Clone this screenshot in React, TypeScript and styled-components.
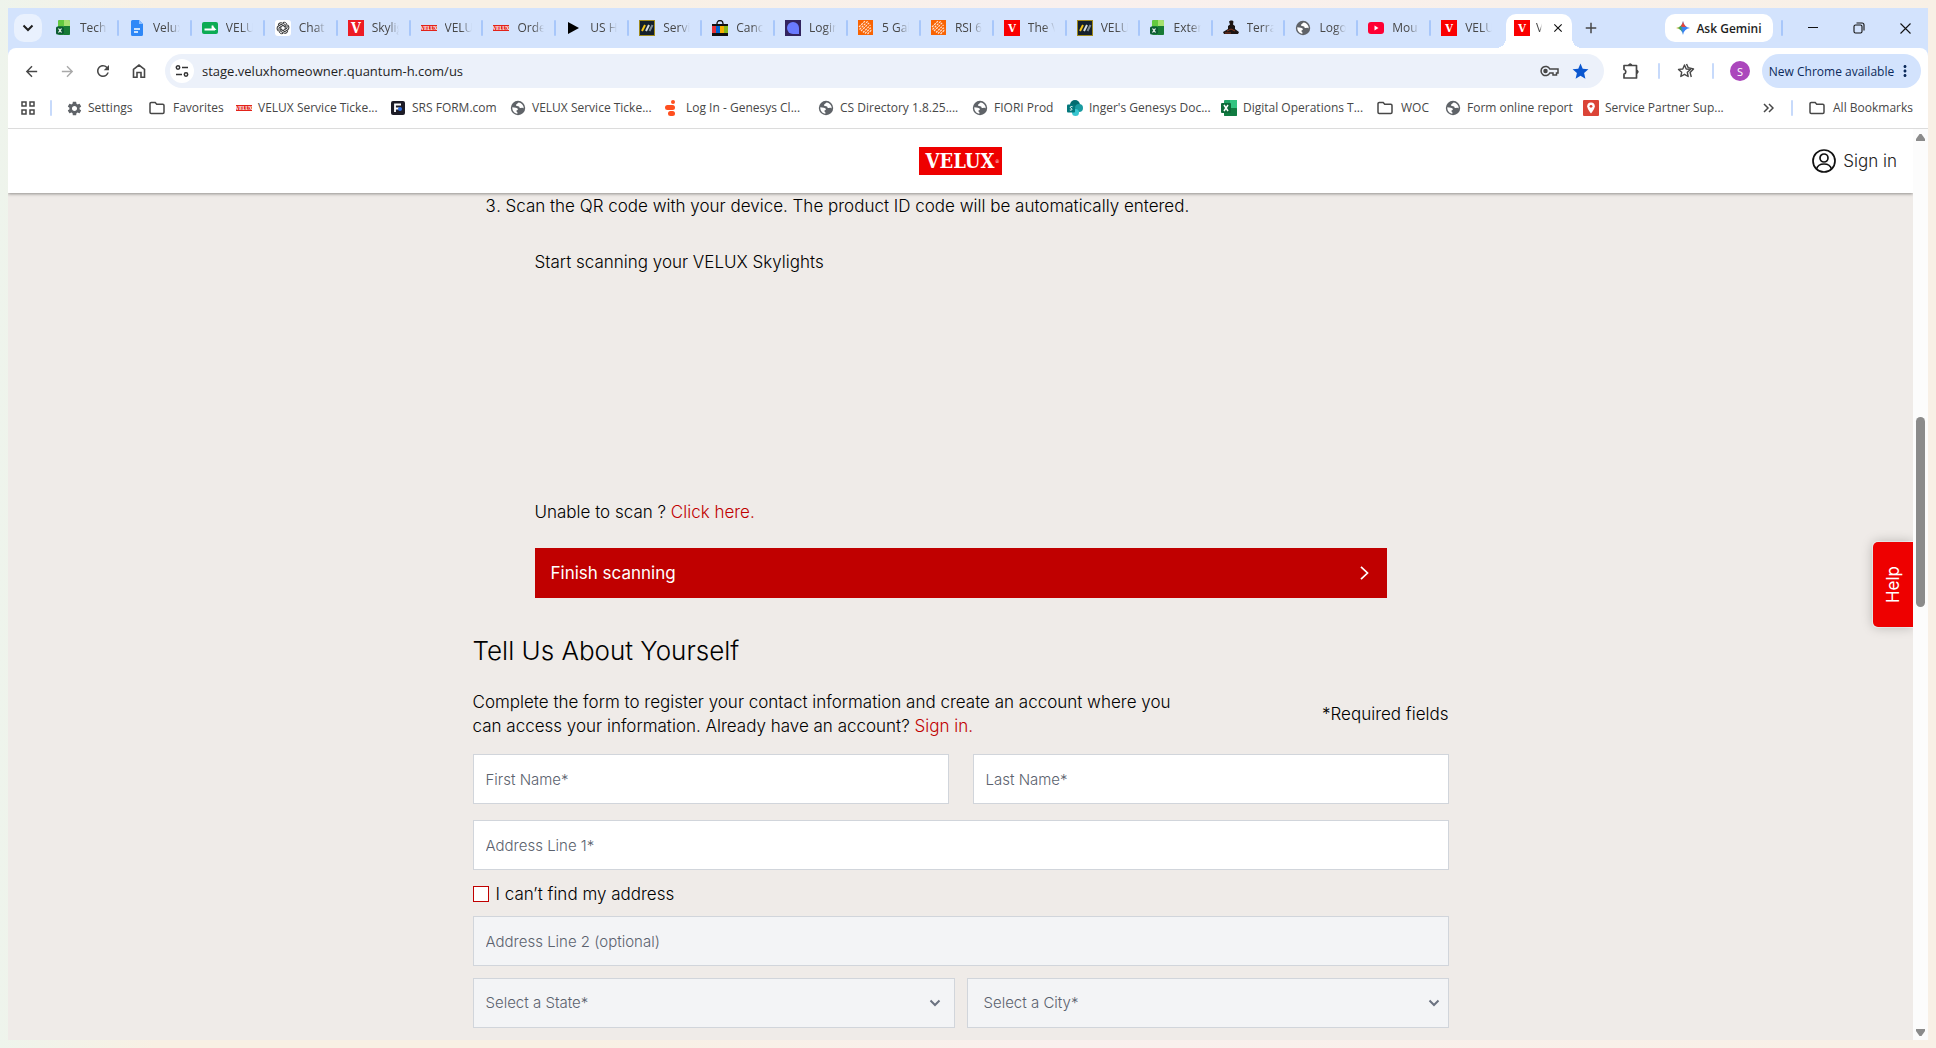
import React from "react";
import styled, { createGlobalStyle, css } from "styled-components";
import {
  MdAdd,
  MdArrowBack,
  MdArrowForward,
  MdClose,
  MdMoreVert,
  MdRefresh,
  MdSettings,
  MdStar,
} from "react-icons/md";

const chromeFont = `"Open Sans", "Noto Sans", sans-serif`;
const siteFont = `Inter, "Noto Sans", sans-serif`;

const GlobalStyle = createGlobalStyle`
  *, *::before, *::after { box-sizing: border-box; }
  body { margin: 0; }
  button, input, select { font: inherit; color: inherit; }
  button { border: 0; padding: 0; background: none; cursor: pointer; }
  svg { display: block; flex: none; }
`;

const Desktop = styled.div`
  height: 100vh;
  padding: 8px;
  background: linear-gradient(90deg, #eef4ec 0, #f8f0e4 8%, #f8f0e4 30%, #f9f0ee 55%, #f8f0e6 100%);
`;

const Window = styled.div`
  display: flex;
  flex-direction: column;
  height: 100%;
  overflow: hidden;
  background: #fff;
  font-family: ${chromeFont};
  color: #1f1f1f;
`;

/* ---------- tab strip ---------- */

const TabStrip = styled.div`
  display: flex;
  align-items: center;
  height: 40px;
  flex: none;
  padding-left: 6px;
  background: #d3e3fd;
`;

const TabSearch = styled.button`
  display: grid;
  place-items: center;
  width: 28px;
  height: 28px;
  margin-right: 4px;
  border-radius: 10px;
  background: #e9f1fe;
`;

const Tabs = styled.div`
  display: flex;
  flex: 1;
  min-width: 0;
  align-self: stretch;
`;

const Tab = styled.button`
  display: flex;
  flex: 1 1 0;
  min-width: 0;
  align-items: center;
  gap: 8px;
  padding-left: 10px;
  text-align: left;

  &::after {
    content: "";
    width: 2px;
    height: 16px;
    margin-left: auto;
    border-radius: 1px;
    background: #a8c7fa;
  }
  &:last-of-type::after { background: none; }
`;

const TabLabel = styled.span<{ $short?: boolean }>`
  width: ${(p) => (p.$short ? 6 : 27)}px;
  overflow: hidden;
  white-space: nowrap;
  font-size: 12px;
  line-height: 16px;
  color: #474747;
  mask-image: linear-gradient(90deg, #000 60%, transparent);
`;

const ActiveTab = styled.div`
  position: relative;
  display: flex;
  align-items: center;
  align-self: flex-end;
  gap: 6px;
  width: 66px;
  height: 34px;
  margin: 0 5px 0 2px;
  padding: 0 0 6px 8px;
  border-radius: 10px 10px 0 0;
  background: #fff;

  &::before, &::after {
    content: "";
    position: absolute;
    bottom: 0;
    width: 10px;
    height: 10px;
  }
  &::before {
    right: 100%;
    background: radial-gradient(circle at 0 0, transparent 10px, #fff 10px);
  }
  &::after {
    left: 100%;
    background: radial-gradient(circle at 100% 0, transparent 10px, #fff 10px);
  }
`;

const IconButton = styled.button<{ $w?: number }>`
  display: grid;
  place-items: center;
  flex: none;
  width: ${(p) => p.$w ?? 36}px;
  height: 28px;
  color: #474747;
`;

const AskGemini = styled.button`
  display: flex;
  align-items: center;
  justify-content: center;
  gap: 6px;
  width: 108px;
  height: 28px;
  margin-left: 60px;
  margin-right: 8px;
  border-radius: 10px;
  background: #fff;
  font-size: 12px;
  font-weight: 600;
`;

const Divider = styled.span<{ $tone?: string; $before?: number }>`
  flex: none;
  width: 2px;
  height: 16px;
  margin-left: ${(p) => p.$before ?? 0}px;
  border-radius: 1px;
  background: ${(p) => p.$tone ?? "#c7dafb"};
`;

const WindowControls = styled.div`
  display: flex;
  margin-left: 7px;
`;

/* ---------- toolbar ---------- */

const ToolBand = styled.div`
  flex: none;
  background: #d3e3fd;
`;

const Toolbar = styled.div`
  display: flex;
  align-items: center;
  height: 46px;
  padding: 0 7px 0 5px;
  border-radius: 8px 8px 0 0;
  background: #fff;
`;

const AddressBar = styled.div`
  display: flex;
  flex: 1;
  align-items: center;
  gap: 8px;
  height: 34px;
  margin-left: 8px;
  padding: 0 14px 0 5px;
  border-radius: 17px;
  background: #ecf1fa;
`;

const SiteInfo = styled.button`
  display: grid;
  place-items: center;
  width: 24px;
  height: 24px;
  border-radius: 50%;
  background: #fff;
`;

const Url = styled.input`
  flex: 1;
  min-width: 0;
  padding: 0;
  border: 0;
  outline: 0;
  background: none;
  font-size: 13px;
  line-height: 20px;
`;

const Avatar = styled.button`
  display: grid;
  place-items: center;
  width: 20px;
  height: 20px;
  margin: 0 12px 0 16px;
  border-radius: 50%;
  background: #ab47bc;
  color: #fff;
  font-size: 11px;
`;

const UpdateButton = styled.button`
  display: flex;
  align-items: center;
  justify-content: center;
  gap: 2px;
  width: 159px;
  height: 34px;
  border-radius: 17px;
  background: #d3e3fd;
  color: #0b2a5b;
  font-size: 12px;
  white-space: nowrap;
`;

/* ---------- bookmarks ---------- */

const Bookmarks = styled.nav`
  display: flex;
  align-items: center;
  flex: none;
  height: 35px;
  padding: 0 15px 7px 13px;
  border-bottom: 1px solid #dcdcdc;
`;

const Bookmark = styled.a<{ $w?: number; $wide?: boolean }>`
  display: flex;
  align-items: center;
  gap: ${(p) => (p.$wide ? 8 : 6)}px;
  ${(p) => p.$w && css`width: ${p.$w}px;`}
  color: #474747;
  font-size: 12px;
  line-height: 16px;
  white-space: nowrap;
  text-decoration: none;
`;

const BookmarkRow = styled.div`
  display: flex;
  flex: 1;
  min-width: 0;
  overflow: hidden;
  margin-left: 14px;
`;

const FavSlot = styled.span`
  display: grid;
  place-items: center;
  flex: none;
  width: 16px;
  height: 16px;
  color: #5f6368;
`;

/* ---------- site ---------- */

const Viewport = styled.div`
  display: flex;
  flex: 1;
  min-height: 0;
  font-family: ${siteFont};
`;

const Site = styled.div`
  position: relative;
  flex: 1;
  min-width: 0;
  overflow: hidden;
  background: #efebe8;
  font-size: 17px;
  font-weight: 300;
  line-height: 24px;
  color: #000;
`;

const SiteHeader = styled.header`
  display: grid;
  grid-template-columns: 1fr auto 1fr;
  align-items: center;
  height: 64px;
  padding: 0 16px;
  background: #fff;
  box-shadow: 0 1px 3px rgba(0, 0, 0, 0.4);
`;

const SignIn = styled.a`
  display: flex;
  align-items: center;
  justify-content: flex-end;
  gap: 7px;
  grid-column: 3;
  color: #222;
  text-decoration: none;
`;

const LogoLink = styled.a`
  grid-column: 2;
`;

const Content = styled.main`
  width: 100%;
  max-width: 976px;
  margin: 0 auto;
`;

const Steps = styled.ol`
  margin: 1px 0 0;
  padding-left: 33px;
`;

const ScanArea = styled.section`
  padding: 32px 62px 0;
`;

const ScanText = styled.p`
  margin: 0;
`;

const ScannerFrame = styled.div`
  height: 226px;
`;

const RedLink = styled.a`
  color: #c00000;
  text-decoration: none;
`;

const FinishButton = styled.button`
  display: flex;
  align-items: center;
  justify-content: space-between;
  width: 100%;
  height: 50px;
  margin-top: 24px;
  padding: 0 16px;
  background: #c00000;
  color: #fff;
  font-weight: 400;
`;

const Title = styled.h2`
  margin: 37px 0 23px;
  font-size: 26px;
  font-weight: 300;
  line-height: 32px;
`;

const Intro = styled.div`
  display: flex;
  align-items: center;
  justify-content: space-between;
  margin-bottom: 16px;
`;

const IntroText = styled.p`
  max-width: 728px;
  margin: 0;
`;

const Row = styled.div<{ $gap?: number; $after: number }>`
  display: flex;
  gap: ${(p) => p.$gap ?? 0}px;
  margin-bottom: ${(p) => p.$after}px;
`;

const field = css`
  flex: 1;
  width: 100%;
  min-width: 0;
  height: 50px;
  padding: 0 12px;
  border: 1px solid #d1d5db;
  border-radius: 0;
  outline: 0;
  background: #fff;
  color: #5b626e;
  font-size: 15px;
  line-height: 20px;
  &:disabled { background: #f3f4f6; opacity: 1; }
`;

const Field = styled.input`
  ${field}
  &::placeholder { color: #5b626e; opacity: 1; }
`;

const SelectBox = styled.div<{ $edge?: number }>`
  display: grid;
  flex: 1;
  align-items: center;
  > * { grid-area: 1 / 1; }
  > svg { justify-self: end; margin-right: ${(p) => p.$edge ?? 14}px; pointer-events: none; color: #6b7280; }
`;

const Select = styled.select<{ $inset?: number }>`
  ${field}
  appearance: none;
  padding-left: ${(p) => p.$inset ?? 12}px;
`;

const CheckLabel = styled.label`
  display: flex;
  align-items: center;
  gap: 7px;
  margin: 12px 0 10px;
`;

const Check = styled.input`
  appearance: none;
  width: 16px;
  height: 16px;
  margin: 0;
  border: 1px solid #c00000;
  background: #fff;
`;

const HelpTab = styled.button`
  position: absolute;
  right: 0;
  top: 413px;
  width: 40px;
  height: 85px;
  border-radius: 5px 0 0 5px;
  background: #ee0000;
  color: #fff;
  font-weight: 400;
  box-shadow: 0 0 12px rgba(0, 0, 0, 0.25), 0 0 0 1px #fff;
  writing-mode: sideways-lr;
`;

const ScrollTrack = styled.div`
  display: grid;
  grid-template-rows: 283px 190px 1fr;
  justify-items: center;
  flex: none;
  width: 15px;
  padding: 5px 0 4px;
  background: #fcfcfc;
  > svg:last-child { align-self: end; }
`;

const ScrollThumb = styled.div`
  width: 9px;
  border-radius: 5px;
  background: #8b8b8b;
`;

/* ---------- drawings ---------- */

const slab = `"DejaVu Serif Condensed", "DejaVu Serif", serif`;

const VeluxV = ({ bright }: { bright?: boolean }) => (
  <svg width="16" height="16" viewBox="0 0 16 16">
    <rect width="16" height="16" fill={bright ? "#fa0000" : "#ed1c24"} />
    <text x="8" y={bright ? 12 : 13} textAnchor="middle" fontFamily={slab} fontWeight="700" fontSize={bright ? 11 : 14} fill="#fff">V</text>
  </svg>
);
const VeluxMini = () => (
  <svg width="16" height="16" viewBox="0 0 16 16">
    <rect y="5" width="16" height="6" fill="#e2231a" />
    <text x="8" y="10" textAnchor="middle" fontFamily={slab} fontWeight="700" fontSize="5" fill="#fff">VELUX</text>
  </svg>
);
const Excel = ({ bright }: { bright?: boolean }) =>
  bright ? (
    <svg width="16" height="16" viewBox="0 0 16 16">
      <rect x="2" y="0" width="12" height="15" rx="1.500" fill="#2a9d3c" />
      <path d="M3.500 0H8v6H2V1.500A1.500 1.500 0 0 1 3.500 0z" fill="#63c93f" />
      <path d="M8 0h4.500A1.500 1.500 0 0 1 14 1.500V6H8z" fill="#a5e070" />
      <path d="M8 6h6v7.500a1.500 1.500 0 0 1-1.500 1.500H8z" fill="#177a35" />
      <rect x="0" y="6.500" width="8" height="8" rx="1.500" fill="#0c5c33" />
      <path d="M2.500 8.500l3 4M5.500 8.500l-3 4" stroke="#fff" strokeWidth="1.200" />
    </svg>
  ) : (
    <svg width="16" height="16" viewBox="0 0 16 16">
      <rect x="3" y="0" width="13" height="16" rx="1" fill="#21a366" />
      <rect x="9" y="0" width="7" height="8" fill="#33c481" />
      <rect x="3" y="8" width="13" height="8" rx="1" fill="#107c41" />
      <rect x="0" y="3" width="10" height="10" rx="1" fill="#0e6b39" />
      <path d="M3 5l4 6M7 5l-4 6" stroke="#fff" strokeWidth="1.500" />
    </svg>
  );
const Docs = () => (
  <svg width="16" height="16" viewBox="0 0 16 16">
    <path d="M3.500 0H10l4 4v10.500a1.500 1.500 0 0 1-1.500 1.500h-9A1.500 1.500 0 0 1 2 14.500v-13A1.500 1.500 0 0 1 3.500 0z" fill="#2f88f7" />
    <path d="M10 0l4 4h-4z" fill="#8ec0ff" />
    <path d="M5 9h6M5 12h4" stroke="#fff" strokeWidth="1.500" />
  </svg>
);
const GreenArrow = () => (
  <svg width="16" height="16" viewBox="0 0 16 16">
    <rect y="2" width="16" height="12" rx="2" fill="#0cab54" />
    <path d="M2.500 9.500H13M10.500 5.500v5" stroke="#fff" strokeWidth="1.800" />
    <path d="M10.500 5.500l4 4.500h-4z" fill="#fff" />
  </svg>
);
const ChatKnot = () => (
  <svg width="16" height="16" viewBox="0 0 16 16">
    <rect width="16" height="16" rx="3" fill="#fff" />
    <g fill="none" stroke="#333" strokeWidth="1">
      {[0, 60, 120, 180, 240, 300].map((a) => (
        <path key={a} transform={`rotate(${a} 8 8)`} d="M8 2.500c2-.8 4 .6 4 2.600v3.200L8 10.500" />
      ))}
    </g>
  </svg>
);
const Play = () => (
  <svg width="16" height="16" viewBox="0 0 16 16"><path d="M2 2l11 6-11 6z" fill="#000" /></svg>
);
const Stripes = () => (
  <svg width="16" height="16" viewBox="0 0 16 16">
    <rect x=".5" y=".5" width="15" height="15" fill="#14202b" stroke="#a08a1c" />
    <path d="M3 11l3-6" stroke="#f5c518" strokeWidth="2" />
    <path d="M7 11l3-6" stroke="#d7dde2" strokeWidth="2" />
    <path d="M10.500 11l3-6" stroke="#7f8c96" strokeWidth="2" />
  </svg>
);
const Bag = () => (
  <svg width="16" height="16" viewBox="0 0 16 16">
    <path d="M5 5V3.500a3 3 0 0 1 6 0V5" fill="none" stroke="#111" strokeWidth="1.300" />
    <path d="M0 4h16v3H0zM0 13h16v3H0z" fill="#111" />
    <path d="M0 6h4v7H0z" fill="#e53238" /><path d="M4 6h4v7H4z" fill="#0064d2" />
    <path d="M8 6h4v7H8z" fill="#f5af02" /><path d="M12 6h4v7h-4z" fill="#86b817" />
  </svg>
);
const LoginMark = () => (
  <svg width="16" height="16" viewBox="0 0 16 16">
    <rect width="16" height="16" fill="#33245f" />
    <path d="M8 2a6 6 0 0 1 6 6v6H8A6 6 0 0 1 8 2z" fill="#6a7bff" />
  </svg>
);
const Depot = () => (
  <svg width="16" height="16" viewBox="0 0 16 16">
    <rect width="15" height="15" fill="#f96302" />
    <g stroke="#ffe3d2" strokeWidth="1.200" strokeDasharray="2.200 .9">
      <path d="M1 7l6-6M1.500 9.500L10 1M3 11l8.500-8.500M5 12.500L12.500 5M7 13.500l6.500-6.500M9.500 14l4.500-4.500" />
    </g>
  </svg>
);
const Terra = () => (
  <svg width="16" height="16" viewBox="0 0 16 16">
    <path d="M6 1.500C7 0 10 0 10.500 1.500L10 4.500l2 1.500v3l4 3-1 2H1l-1-2 5-3V6l2-1.500z" fill="#1c1513" />
    <path d="M4 11l4-2 4 2M2 13h6" stroke="#8a3b22" strokeWidth="1" fill="none" />
  </svg>
);
const Tube = () => (
  <svg width="16" height="16" viewBox="0 0 16 16">
    <rect y="2" width="16" height="12" rx="3" fill="#ff0033" />
    <path d="M6.500 5.500v5l4-2.500z" fill="#fff" />
  </svg>
);
const SrsMark = () => (
  <svg width="14" height="14" viewBox="0 0 14 14">
    <rect width="14" height="14" rx="2" fill="#1d1c26" />
    <path d="M4 11V3.500h6M4 7.500h4" stroke="#fff" strokeWidth="1.800" fill="none" />
    <circle cx="9" cy="8" r="2" fill="#2f6fe4" />
  </svg>
);
const Genesys = () => (
  <svg width="16" height="16" viewBox="0 0 16 16" fill="#ff4f1f">
    <circle cx="9" cy="2" r="2" /><rect x="1" y="5" width="10" height="5" rx="2.500" />
    <rect x="4" y="11" width="7" height="5" rx="2.500" />
  </svg>
);
const SharePoint = () => (
  <svg width="16" height="16" viewBox="0 0 16 16">
    <circle cx="8" cy="5" r="5" fill="#036c70" /><circle cx="12" cy="8" r="4" fill="#1a9ba1" />
    <circle cx="8.500" cy="12.500" r="3.500" fill="#37c6d0" /><rect y="4.500" width="8" height="8" rx="1" fill="#03787c" />
    <path d="M5.500 6.700c-2-.8-3 .8-1.500 1.600 1.700.6 1 2.400-1.200 1.700" stroke="#fff" fill="none" />
  </svg>
);
const Pin = () => (
  <svg width="16" height="16" viewBox="0 0 16 16">
    <rect width="16" height="16" rx="1" fill="#db4437" />
    <path d="M8 2.500a3.800 3.800 0 0 1 3.800 3.800C11.800 9 8 13.500 8 13.500S4.200 9 4.200 6.300A3.800 3.800 0 0 1 8 2.500z" fill="#fff" />
    <circle cx="8" cy="6.300" r="1.400" fill="#db4437" />
  </svg>
);
const Globe = () => (
  <svg width="16" height="16" viewBox="0 0 16 16">
    <circle cx="8" cy="8" r="7.200" fill="#5f6368" />
    <path d="M9 2.600c-1.500.2-1.300 1.300-2.500 1.600-1 .3-.6 1.600.5 1.700 1.600.2 2.500.4 2.500 1.500s1.500.6 2.300.4 1.600.2 1.900.8A5.700 5.700 0 0 0 9 2.600zM2.300 7.200C2 10.500 4.200 13.300 7.400 13.700v-1.400c-.9-.2-1-1-.9-1.800.7-.3 1.500-.4 1.400-1.400C7.500 7.700 4.800 7.300 2.300 7.200z" fill="#fff" />
  </svg>
);
const Folder = () => (
  <svg width="16" height="14" viewBox="0 0 16 14">
    <path d="M2.200 1.500h4l1.500 1.700h6.100a1.200 1.200 0 0 1 1.200 1.200v6.900a1.200 1.200 0 0 1-1.200 1.200H2.200A1.200 1.200 0 0 1 1 11.300V2.700a1.200 1.200 0 0 1 1.200-1.200z" fill="none" stroke="#474747" strokeWidth="1.500" />
  </svg>
);
const Chevron = ({ stroke = 2 }: { stroke?: number }) => (
  <svg width="12" height="12" viewBox="0 0 12 12" fill="none" stroke="currentColor" strokeWidth={stroke}>
    <path d="M1.500 3.500L6 8l4.500-4.500" />
  </svg>
);
const GeminiSpark = () => (
  <svg width="14" height="14" viewBox="0 0 14 14">
    <defs>
      <linearGradient id="spark" x1="0" y1="0.500" x2="1" y2="0.500">
        <stop offset="0" stopColor="#f9ab00" /><stop offset=".3" stopColor="#34a853" />
        <stop offset=".5" stopColor="#3b82f6" /><stop offset="1" stopColor="#3b82f6" />
      </linearGradient>
    </defs>
    <path d="M7 0c.6 4 3 6.400 7 7-4 .6-6.400 3-7 7-.6-4-3-6.400-7-7 4-.6 6.400-3 7-7z" fill="url(#spark)" />
    <path d="M7 0c.5 3 1.600 4.700 3.300 5.800L7 6 4.500 5.200C6 4 6.700 2.300 7 0z" fill="#ea4335" />
  </svg>
);
const HomeIcon = () => (
  <svg width="14" height="16" viewBox="0 0 14 16" fill="none" stroke="#474747" strokeWidth="1.600">
    <path d="M1.500 14.200V6.300L7 2l5.500 4.300v7.900H9V9.500H5v4.700z" />
  </svg>
);
const TuneIcon = () => (
  <svg width="14" height="12" viewBox="0 0 14 12" fill="none" stroke="#333" strokeWidth="1.500">
    <circle cx="3" cy="2.500" r="1.700" /><path d="M7 2.500h6M1 9.500h6" /><circle cx="11" cy="9.500" r="1.700" />
  </svg>
);
const KeyIcon = () => (
  <svg width="20" height="12" viewBox="0 0 20 12" fill="none" stroke="#474747" strokeWidth="1.500">
    <path d="M9.800 4A4.600 4.600 0 1 0 9.800 8H13v2h3.500V8H18V4z" /><circle cx="5.500" cy="6" r="1.500" fill="#474747" />
  </svg>
);
const PuzzleIcon = () => (
  <svg width="18" height="18" viewBox="0 0 18 18" fill="none" stroke="#474747" strokeWidth="1.700" strokeLinejoin="round">
    <path d="M2 3.500h12.500v12.500H2V12a2.300 2.300 0 0 0 0-4.500z" />
    <path d="M6.500 3.200a1.800 1.800 0 0 1 3.500 0zM14.800 8a1.800 1.800 0 0 1 0 3.500z" fill="#474747" strokeWidth="1" />
  </svg>
);
const StarListIcon = () => (
  <svg width="18" height="16" viewBox="0 0 18 16" fill="none" stroke="#474747" strokeWidth="1.400" strokeLinejoin="round">
    <path d="M7.500 2l1.700 4 4.300.4-3.200 2.900.9 4.200-3.700-2.200-3.700 2.200.9-4.200L1.500 6.400l4.300-.4z" />
    <path d="M9.500 1l1.700 3.600L16.500 6l-3.400 3.500 1.200 4.500" />
  </svg>
);
const RestoreIcon = () => (
  <svg width="12" height="12" viewBox="0 0 12 12" fill="none" stroke="#111" strokeWidth="1.100">
    <rect x="1" y="3" width="8" height="8" rx="1.500" /><path d="M3.500 1H9a2 2 0 0 1 2 2v5.500" />
  </svg>
);
const UserIcon = () => (
  <svg width="24" height="24" viewBox="0 0 24 24" fill="none" stroke="#111" strokeWidth="1.700">
    <circle cx="12" cy="12" r="11" /><circle cx="12" cy="9" r="4" /><path d="M4.500 20c1-3.600 4-5 7.500-5s6.500 1.400 7.500 5" />
  </svg>
);
const VeluxLogo = () => (
  <svg width="83" height="28" viewBox="0 0 83 28" role="img" aria-label="VELUX">
    <rect width="83" height="28" fill="#ee0000" />
    <text x="41" y="21" textAnchor="middle" fontFamily={slab} fontWeight="700" fontSize="20" fill="#fff">VELUX</text>
    <text x="76" y="16" fontFamily={slab} fontSize="5" fill="#fff">®</text>
  </svg>
);

/* ---------- data ---------- */

const tabs: [string, React.ReactNode][] = [
  ["Tech", <Excel bright />], ["Velux", <Docs />], ["VELU", <GreenArrow />], ["Chat", <ChatKnot />],
  ["Skylig", <VeluxV />], ["VELU", <VeluxMini />], ["Orde", <VeluxMini />], ["US H", <Play />],
  ["Servi", <Stripes />], ["Canc", <Bag />], ["Login", <LoginMark />], ["5 Gal", <Depot />],
  ["RSI 6", <Depot />], ["The V", <VeluxV bright />], ["VELU", <Stripes />], ["Exter", <Excel bright />],
  ["Terra", <Terra />], ["Logo", <Globe />], ["Mou", <Tube />], ["VELU", <VeluxV bright />],
];

const bookmarks: [string, React.ReactNode, number][] = [
  ["Settings", <MdSettings size={17} />, 83],
  ["Favorites", <Folder />, 87],
  ["VELUX Service Ticke...", <VeluxMini />, 154],
  ["SRS FORM.com", <SrsMark />, 120],
  ["VELUX Service Ticke...", <Globe />, 154],
  ["Log In - Genesys Cl...", <Genesys />, 154],
  ["CS Directory 1.8.25....", <Globe />, 154],
  ["FIORI Prod", <Globe />, 95],
  ["Inger's Genesys Doc...", <SharePoint />, 154],
  ["Digital Operations T...", <Excel />, 156],
  ["WOC", <Folder />, 68],
  ["Form online report", <Globe />, 138],
  ["Service Partner Sup...", <Pin />, 140],
];

export default function App() {
  return (
    <Desktop>
      <GlobalStyle />
      <Window>
        <TabStrip>
          <TabSearch aria-label="Search tabs"><Chevron /></TabSearch>
          <Tabs>
            {tabs.map(([label, icon], i) => (
              <Tab key={i}>
                <FavSlot>{icon}</FavSlot>
                <TabLabel>{label}</TabLabel>
              </Tab>
            ))}
          </Tabs>
          <ActiveTab>
            <FavSlot><VeluxV bright /></FavSlot>
            <TabLabel $short>V</TabLabel>
            <IconButton $w={20} aria-label="Close tab"><MdClose size={14} color="#111" /></IconButton>
          </ActiveTab>
          <IconButton $w={28} aria-label="New tab"><MdAdd size={18} /></IconButton>
          <AskGemini><GeminiSpark />Ask Gemini</AskGemini>
          <Divider $tone="#a8c7fa" />
          <WindowControls>
            <IconButton $w={46} aria-label="Minimize">
              <svg width="10" height="10" viewBox="0 0 10 10"><path d="M0 4.500h10" stroke="#111" /></svg>
            </IconButton>
            <IconButton $w={46} aria-label="Restore"><RestoreIcon /></IconButton>
            <IconButton $w={46} aria-label="Close">
              <svg width="11" height="11" viewBox="0 0 11 11"><path d="M.5.5l10 10M10.500.5l-10 10" stroke="#111" strokeWidth="1.100" /></svg>
            </IconButton>
          </WindowControls>
        </TabStrip>

        <ToolBand>
          <Toolbar>
            <IconButton aria-label="Back"><MdArrowBack size={17} /></IconButton>
            <IconButton aria-label="Forward"><MdArrowForward size={17} color="#a9a9a9" /></IconButton>
            <IconButton aria-label="Reload"><MdRefresh size={18} /></IconButton>
            <IconButton aria-label="Home"><HomeIcon /></IconButton>
            <AddressBar>
              <SiteInfo aria-label="View site information"><TuneIcon /></SiteInfo>
              <Url aria-label="Address" defaultValue="stage.veluxhomeowner.quantum-h.com/us" />
              <IconButton $w={24} aria-label="Passwords"><KeyIcon /></IconButton>
              <IconButton $w={20} aria-label="Bookmarked"><MdStar size={19} color="#0b57d0" /></IconButton>
            </AddressBar>
            <IconButton $w={54} aria-label="Extensions"><PuzzleIcon /></IconButton>
            <Divider />
            <IconButton $w={52} aria-label="Reading list"><StarListIcon /></IconButton>
            <Divider />
            <Avatar aria-label="Profile">S</Avatar>
            <UpdateButton>New Chrome available <MdMoreVert size={18} /></UpdateButton>
          </Toolbar>
        </ToolBand>

        <Bookmarks>
          <IconButton $w={14} aria-label="Apps">
            <svg width="14" height="14" viewBox="0 0 14 14" fill="none" stroke="#474747" strokeWidth="1.500">
              <path d="M1 1h4v4H1zM9 1h4v4H9zM1 9h4v4H1zM9 9h4v4H9z" />
            </svg>
          </IconButton>
          <Divider $before={15} />
          <BookmarkRow>
            {bookmarks.map(([label, icon, w], i) => (
              <Bookmark key={i} href="#" $w={w} $wide={label === "Favorites" || label === "WOC"}>
                <FavSlot>{icon}</FavSlot>{label}
              </Bookmark>
            ))}
          </BookmarkRow>
          <IconButton $w={14} aria-label="More bookmarks">
            <svg width="11" height="10" viewBox="0 0 11 10" fill="none" stroke="#474747" strokeWidth="1.500"><path d="M1 1l4 4-4 4M6 1l4 4-4 4" /></svg>
          </IconButton>
          <IconButton $w={34} as="span"><Divider /></IconButton>
          <Bookmark href="#" $wide><FavSlot><Folder /></FavSlot>All Bookmarks</Bookmark>
        </Bookmarks>

        <Viewport>
          <Site>
            <SiteHeader>
              <LogoLink href="#"><VeluxLogo /></LogoLink>
              <SignIn href="#"><UserIcon />Sign in</SignIn>
            </SiteHeader>
            <Content>
              <Steps start={3}>
                <li>Scan the QR code with your device. The product ID code will be automatically entered.</li>
              </Steps>
              <ScanArea>
                <ScanText>Start scanning your VELUX Skylights</ScanText>
                <ScannerFrame />
                <ScanText>Unable to scan ? <RedLink href="#">Click here.</RedLink></ScanText>
                <FinishButton>
                  Finish scanning
                  <svg width="14" height="14" viewBox="0 0 14 14" fill="none" stroke="#fff" strokeWidth="1.700"><path d="M4 .8L10.500 7 4 13.200" /></svg>
                </FinishButton>
              </ScanArea>
              <Title>Tell Us About Yourself</Title>
              <Intro>
                <IntroText>
                  Complete the form to register your contact information and create an account where you
                  can access your information. Already have an account? <RedLink href="#">Sign in.</RedLink>
                </IntroText>
                <span>*Required fields</span>
              </Intro>
              <form>
                <Row $gap={24} $after={16}>
                  <Field placeholder="First Name*" aria-label="First Name" />
                  <Field placeholder="Last Name*" aria-label="Last Name" />
                </Row>
                <Row $after={12}>
                  <Field placeholder="Address Line 1*" aria-label="Address Line 1" />
                </Row>
                <CheckLabel><Check type="checkbox" />I can’t find my address</CheckLabel>
                <Row $after={12}>
                  <Field placeholder="Address Line 2 (optional)" aria-label="Address Line 2" disabled />
                </Row>
                <Row $gap={12} $after={12}>
                  <SelectBox>
                    <Select disabled aria-label="State"><option>Select a State*</option></Select>
                    <Chevron />
                  </SelectBox>
                  <SelectBox $edge={9}>
                    <Select disabled aria-label="City" $inset={16}><option>Select a City*</option></Select>
                    <Chevron />
                  </SelectBox>
                </Row>
              </form>
            </Content>
            <HelpTab>Help</HelpTab>
          </Site>
          <ScrollTrack>
            <svg width="9" height="7" viewBox="0 0 9 7"><path d="M3.500 0h2L9 5v2H0V5z" fill="#8b8b8b" /></svg>
            <ScrollThumb />
            <svg width="9" height="7" viewBox="0 0 9 7"><path d="M3.500 7h2L9 2V0H0v2z" fill="#8b8b8b" /></svg>
          </ScrollTrack>
        </Viewport>
      </Window>
    </Desktop>
  );
}
